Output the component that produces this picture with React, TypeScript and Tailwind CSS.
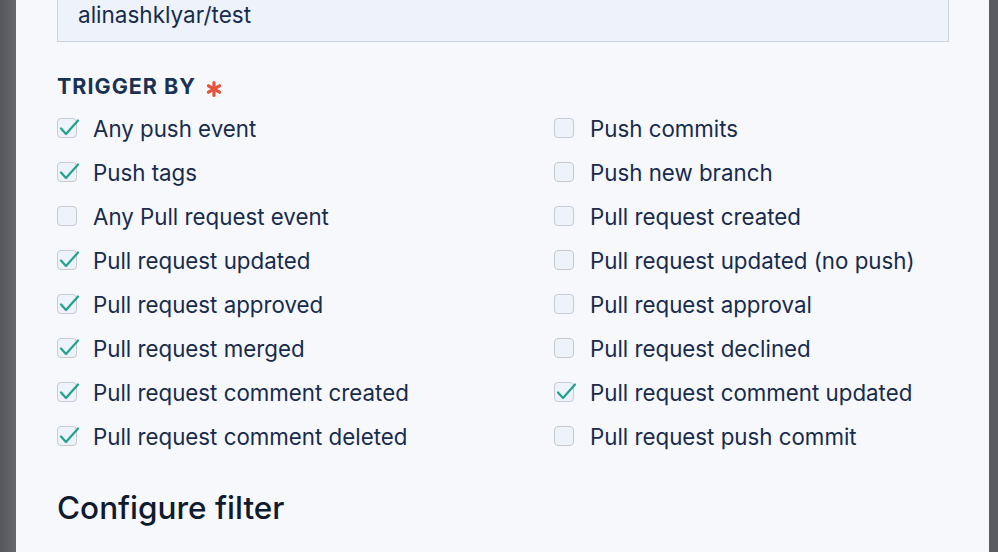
import React, { useState } from "react";

const left = [
  ["Any push event", true],
  ["Push tags", true],
  ["Any Pull request event", false],
  ["Pull request updated", true],
  ["Pull request approved", true],
  ["Pull request merged", true],
  ["Pull request comment created", true],
  ["Pull request comment deleted", true],
] as const;

const right = [
  ["Push commits", false],
  ["Push new branch", false],
  ["Pull request created", false],
  ["Pull request updated (no push)", false],
  ["Pull request approval", false],
  ["Pull request declined", false],
  ["Pull request comment updated", true],
  ["Pull request push commit", false],
] as const;

const Check = ({ label, initial }: { label: string; initial: boolean }) => {
  const [on, setOn] = useState(initial);
  return (
    <label className="flex items-center h-[44px] cursor-pointer" onClick={() => setOn(!on)}>
      <span className="relative w-[20px] h-[20px] rounded-[4px] border border-[#c5cad3] bg-[#eef2fa] mr-[16px] shrink-0">
        {on && (
          <svg className="absolute -left-[1px] -top-[3px]" width="24" height="24" viewBox="0 0 24 24">
            <polyline
              points="4,12.5 9,18 21,4.5"
              fill="none"
              stroke="#1fa38c"
              strokeWidth="2.2"
              strokeLinecap="round"
              strokeLinejoin="round"
            />
          </svg>
        )}
      </span>
      <span className="text-[22.3px] text-[#172b4d] leading-none pt-[2px]">{label}</span>
    </label>
  );
};

const App = () => {
  return (
    <div
      className="flex w-full h-[552px] bg-[#5c5e63] overflow-hidden"
      style={{ fontFamily: "Inter, 'Noto Sans', sans-serif" }}
    >
      <div className="w-[16px] shrink-0 bg-gradient-to-r from-[#55575c] to-[#66686d]" />
      <div className="flex-1 bg-[#f7f8fc] pl-[41px] pr-[40px]">
        <div className="h-[42px] bg-[#eef3fb] border border-t-0 border-[#cdd3dc] pl-[20px] text-[22.5px] text-[#172b4d] leading-[30px]">
          alinashklyar/test
        </div>
        <div className="mt-[30px] flex items-center h-[28px]">
          <span className="text-[21.5px] font-bold text-[#193253] tracking-[1px] pt-[1px]">TRIGGER BY</span>
          <svg className="ml-[10px] mt-[5px]" width="16" height="16" viewBox="0 0 15 15">
            <g stroke="#e5533d" strokeWidth="3" strokeLinecap="round">
              <line x1="7.5" y1="1.5" x2="7.5" y2="13.5" />
              <line x1="2.3" y1="4.5" x2="12.7" y2="10.5" />
              <line x1="2.3" y1="10.5" x2="12.7" y2="4.5" />
            </g>
          </svg>
        </div>
        <div className="mt-[6px] grid grid-cols-[497px_1fr]">
          <div className="flex flex-col">
            {left.map(([l, c]) => (
              <Check key={l} label={l} initial={c} />
            ))}
          </div>
          <div className="flex flex-col">
            {right.map(([l, c]) => (
              <Check key={l} label={l} initial={c} />
            ))}
          </div>
        </div>
        <h2 className="mt-[34px] text-[31.5px] text-[#0f1b2e] font-medium leading-none">Configure filter</h2>
      </div>
      <div className="w-[9px] shrink-0 bg-[#5a5c61]" />
    </div>
  );
};

export default App;
